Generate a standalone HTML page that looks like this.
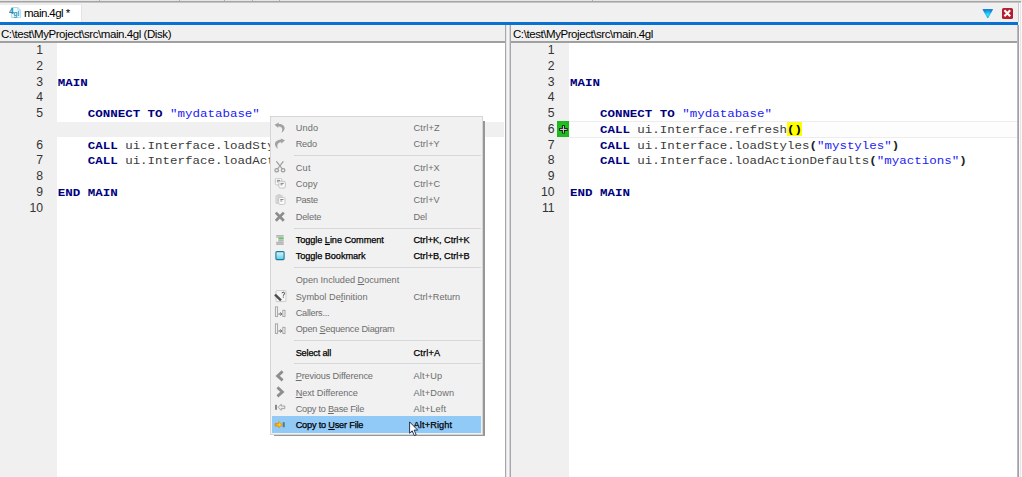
<!DOCTYPE html>
<html><head><meta charset="utf-8"><title>main.4gl</title>
<style>
html,body{margin:0;padding:0}
body{width:1022px;height:477px;position:relative;overflow:hidden;background:#f0f0f0;font-family:"Liberation Sans", sans-serif;}
div,span{box-sizing:border-box}
.abs{position:absolute}
#topline{left:0;top:1px;width:1021px;height:2px;background:linear-gradient(#a4a4a4 0,#a4a4a4 50%,#c6c6c6 50%,#c6c6c6 100%)}
#top0{left:0;top:0;width:1022px;height:1px;background:#e6e6e6}
.tick{top:0;width:1px;height:1px;background:#b0b0b0}
#tab{left:0;top:4px;width:82px;height:19px;background:#fff;border-right:1px solid #e4e4e4;border-top:1px solid #ececec}
#tabtxt{left:24px;top:6px;font-size:11.5px;line-height:14px;color:#000;white-space:nowrap;letter-spacing:-0.55px}
#blue{left:0;top:22px;width:1018px;height:3px;background:#0a71d3}
.path{top:26.5px;height:15px;font-size:11.5px;line-height:15px;color:#000;white-space:nowrap;letter-spacing:-0.43px}
.pb{height:2px;background:#a0a0a0;top:41px}
.gut{background:#f0f0f0}
.ed{background:#fff}
.ln{position:absolute;height:15.75px;line-height:15.75px;font-size:12.2px;color:#333;text-align:right;padding-right:14.5px;white-space:pre}
.cl{position:absolute;height:15.75px;line-height:15.75px;font-family:"Liberation Mono", monospace;font-size:12.48px;color:#3a3a3a;white-space:pre;transform:scaleY(0.88);transform-origin:0 50%}
.k{font-weight:bold;color:#000080}
.s{color:#2222f2}
.p{font-weight:bold;color:#222}
.y{font-weight:bold;color:#000}
#menu{left:270px;top:116px;width:213.4px;height:318.5px;background:#f1f1f1;border:1px solid #d6d6d6}
.sh{position:absolute;background:#979797}
.mi{position:absolute;left:1px;width:208.5px;height:16.35px;line-height:16.35px;font-size:9.2px;color:#6d6d6d;white-space:nowrap}
.mi.en{color:#000;-webkit-text-stroke:0.25px #000}
.mi.hl{background:#91c9f7;height:16.8px;margin-top:-0.2px}
.mi .ic{position:absolute;left:1.8px;top:2.4px;width:13px;height:12px;line-height:0}
.mi .lb{position:absolute;left:23.7px;top:1px}
.mi .sc{position:absolute;left:141.5px;top:1px}
.msep{position:absolute;left:22.5px;width:187px;height:1px;background:#d7d7d7}
</style></head><body>
<div class="abs" id="top0"></div>
<div class="abs" id="topline"></div>
<div class="abs tick" style="left:99px"></div><div class="abs tick" style="left:179px"></div><div class="abs tick" style="left:224px"></div><div class="abs tick" style="left:252px"></div><div class="abs tick" style="left:279px"></div><div class="abs tick" style="left:592px"></div>
<div class="abs" id="tab"></div>
<div class="abs" style="left:9px;top:6.8px;line-height:0"><svg width="13" height="12" viewBox="0 0 13 12"><path d="M2.6 0.5 H8.8 L11.6 3.2 V10.5 H2.6 Z" fill="#f4fbfd" stroke="#a6d6e8" stroke-width=".9"/><path d="M8.8 0.5 V3.2 H11.6" fill="none" stroke="#a6d6e8" stroke-width=".8"/><text x="0.1" y="7" font-size="8.6" font-family="Liberation Sans, sans-serif" fill="#1b8cb5" font-weight="bold">4</text><text x="4.4" y="9.2" font-size="6.6" font-family="Liberation Sans, sans-serif" fill="#2496c0" font-weight="bold">gl</text></svg></div>
<div class="abs" id="tabtxt">main.4gl *</div>
<div class="abs" id="blue"></div>
<div class="abs" style="left:981.6px;top:7.8px;line-height:0"><svg width="12" height="11" viewBox="0 0 12 11"><defs><radialGradient id="tg" cx="0.5" cy="0.62" r="0.5"><stop offset="0" stop-color="#22ecfa"/><stop offset="0.45" stop-color="#1fbef0"/><stop offset="1" stop-color="#1a84d8"/></radialGradient></defs><path d="M1.2 0.9 H10.4 Q11.4 0.9 10.9 1.8 L6.4 9.8 Q5.8 10.6 5.2 9.8 L0.7 1.8 Q0.2 0.9 1.2 0.9 Z" fill="url(#tg)"/></svg></div>
<div class="abs" style="left:1002.3px;top:8.3px;width:10.6px;height:10.4px;background:#b91d2d;border-radius:1.6px;line-height:0"><svg width="10.6" height="10.4" viewBox="0 0 10.6 10.4"><path d="M2.4 2.2 L8.2 8.2 M8.2 2.2 L2.4 8.2" stroke="#fff" stroke-width="2.1"/></svg></div>

<div class="abs path" style="left:1px">C:\test\MyProject\src\main.4gl (Disk)</div>
<div class="abs path" style="left:513px">C:\test\MyProject\src\main.4gl</div>
<div class="abs pb" style="left:0;width:505px"></div>
<div class="abs pb" style="left:511px;width:506px"></div>

<div class="abs gut" style="left:0;top:43px;width:57px;height:434px"></div>
<div class="abs ed" style="left:57px;top:43px;width:448px;height:434px"></div>
<div class="abs" style="left:57px;top:121.6px;width:447px;height:15.2px;background:#f0f0f0"></div>

<div class="abs" style="left:505px;top:25px;width:1px;height:452px;background:#a6a6ac"></div>
<div class="abs" style="left:506px;top:25px;width:1px;height:452px;background:#e4e4e6"></div>
<div class="abs" style="left:507px;top:25px;width:2px;height:452px;background:#f4f4f4"></div>
<div class="abs" style="left:509px;top:25px;width:1px;height:452px;background:#d4d4d8"></div>
<div class="abs" style="left:510px;top:25px;width:1px;height:452px;background:#a6a6ac"></div>
<div class="abs" style="left:1017px;top:25px;width:1px;height:452px;background:#b8b8be"></div>
<div class="abs" style="left:1018px;top:25px;width:1px;height:452px;background:#a0a0a8"></div>
<div class="abs" style="left:1018px;top:3px;width:1px;height:19px;background:#c8c8c8"></div>
<div class="abs" style="left:1019px;top:3px;width:3px;height:474px;background:#fafafa"></div>
<div class="abs" style="left:1020px;top:3px;width:1px;height:474px;background:#e6e6e6"></div>

<div class="abs gut" style="left:511px;top:43px;width:58px;height:434px"></div>
<div class="abs ed" style="left:569px;top:43px;width:448px;height:434px"></div>
<div class="abs" style="left:569px;top:121px;width:448px;height:17px;background:#fdfdfd;border-top:1px solid #ededed;border-bottom:1px solid #ededed"></div>
<div class="abs" style="left:787px;top:121.5px;width:15.2px;height:14.8px;background:#ffff00"></div>
<div class="abs" style="left:557px;top:121.3px;width:12px;height:15.7px;background:radial-gradient(#20c220 40%,#1dae1d 100%)"></div>
<div class="abs" style="left:558px;top:124px;width:11px;height:11px;line-height:0"><svg width="11" height="11" viewBox="0 0 11 11"><path d="M5.4 1.2 V9.6 M1.2 5.4 H9.6" stroke="#0c200c" stroke-width="3"/><path d="M5.4 2 V8.8 M2 5.4 H8.8" stroke="#ecd0ea" stroke-width="1"/></svg></div>
<div class="ln" style="left:0px;top:43.00px;width:57px;padding-right:14px">1</div><div class="ln" style="left:0px;top:58.75px;width:57px;padding-right:14px">2</div><div class="ln" style="left:0px;top:74.50px;width:57px;padding-right:14px">3</div><div class="cl" style="left:57.8px;top:75.70px"><span class="k">MAIN</span></div><div class="ln" style="left:0px;top:90.25px;width:57px;padding-right:14px">4</div><div class="ln" style="left:0px;top:106.00px;width:57px;padding-right:14px">5</div><div class="cl" style="left:57.8px;top:107.20px">    <span class="k">CONNECT TO</span> <span class="s">&quot;mydatabase&quot;</span></div><div class="ln" style="left:0px;top:121.75px;width:57px;padding-right:14px"></div><div class="ln" style="left:0px;top:137.50px;width:57px;padding-right:14px">6</div><div class="cl" style="left:57.8px;top:138.70px">    <span class="k">CALL</span> ui.Interface.loadStyles(<span class="s">&quot;mystyles&quot;</span>)</div><div class="ln" style="left:0px;top:153.25px;width:57px;padding-right:14px">7</div><div class="cl" style="left:57.8px;top:154.45px">    <span class="k">CALL</span> ui.Interface.loadActionDefaults(<span class="s">&quot;myactions&quot;</span>)</div><div class="ln" style="left:0px;top:169.00px;width:57px;padding-right:14px">8</div><div class="ln" style="left:0px;top:184.75px;width:57px;padding-right:14px">9</div><div class="cl" style="left:57.8px;top:185.95px"><span class="k">END MAIN</span></div><div class="ln" style="left:0px;top:200.50px;width:57px;padding-right:14px">10</div>
<div class="ln" style="left:511px;top:43.00px;width:58px;padding-right:14.4px">1</div><div class="ln" style="left:511px;top:58.75px;width:58px;padding-right:14.4px">2</div><div class="ln" style="left:511px;top:74.50px;width:58px;padding-right:14.4px">3</div><div class="cl" style="left:570.0px;top:75.70px"><span class="k">MAIN</span></div><div class="ln" style="left:511px;top:90.25px;width:58px;padding-right:14.4px">4</div><div class="ln" style="left:511px;top:106.00px;width:58px;padding-right:14.4px">5</div><div class="cl" style="left:570.0px;top:107.20px">    <span class="k">CONNECT TO</span> <span class="s">&quot;mydatabase&quot;</span></div><div class="ln" style="left:511px;top:121.75px;width:58px;padding-right:14.4px">6</div><div class="cl" style="left:570.0px;top:122.95px">    <span class="k">CALL</span> ui.Interface.refresh<span class="y">()</span></div><div class="ln" style="left:511px;top:137.50px;width:58px;padding-right:14.4px">7</div><div class="cl" style="left:570.0px;top:138.70px">    <span class="k">CALL</span> ui.Interface.loadStyles<span class="p">(</span><span class="s">&quot;mystyles&quot;</span><span class="p">)</span></div><div class="ln" style="left:511px;top:153.25px;width:58px;padding-right:14.4px">8</div><div class="cl" style="left:570.0px;top:154.45px">    <span class="k">CALL</span> ui.Interface.loadActionDefaults<span class="p">(</span><span class="s">&quot;myactions&quot;</span><span class="p">)</span></div><div class="ln" style="left:511px;top:169.00px;width:58px;padding-right:14.4px">9</div><div class="ln" style="left:511px;top:184.75px;width:58px;padding-right:14.4px">10</div><div class="cl" style="left:570.0px;top:185.95px"><span class="k">END MAIN</span></div><div class="ln" style="left:511px;top:200.50px;width:58px;padding-right:14.4px">11</div>

<div class="abs sh" style="left:483.4px;top:120.5px;width:1.7px;height:315.6px"></div>
<div class="abs sh" style="left:274px;top:434.5px;width:211.1px;height:1.6px"></div>
<div class="abs" id="menu"><div class="mi" style="top:2.30px"><span class="ic"><svg width="12" height="12" viewBox="0 0 12 12"><path d="M0.5 2.7 L4.9 0.6 L4.6 2 C8.5 1.6 11 4.2 10.6 6.6 C10.3 8.6 9 10 7.6 10.9 C8.4 8.6 8.6 6.8 7.4 5.6 C6.6 4.8 5.4 4.5 4.2 4.5 L4.3 5.9 Z" fill="#a2a2a2"/></svg></span><span class="lb" id="lb0" style="top:1px;letter-spacing:0.139px">Undo</span><span class="sc" id="sc0" style="top:1px;letter-spacing:0.174px">Ctrl+Z</span></div><div class="mi" style="top:18.65px"><span class="ic"><svg width="12" height="12" viewBox="0 0 12 12"><path d="M11 2.3 L6.6 0.4 L6.9 1.8 C3 1.6 0.6 4.2 1 6.6 C1.3 8.6 2.4 10 3.8 10.9 C3.2 8.6 3 6.8 4.2 5.6 C5 4.8 6.2 4.3 7.4 4.3 L7.3 5.7 Z" fill="#a2a2a2"/></svg></span><span class="lb" id="lb1" style="top:0.4px;letter-spacing:-0.211px">Redo</span><span class="sc" id="sc1" style="top:0.4px;letter-spacing:0.086px">Ctrl+Y</span></div><div class="msep" style="top:38.05px"></div><div class="mi" style="top:42.10px"><span class="ic"><svg width="12" height="12" viewBox="0 0 12 12"><path d="M2.4 0.3 L8.4 8 M9.4 0.3 L3.4 8" stroke="#9c9c9c" stroke-width="1.2" fill="none"/><ellipse cx="2.7" cy="9.3" rx="1.8" ry="1.6" fill="none" stroke="#9c9c9c" stroke-width="1.2"/><ellipse cx="9.1" cy="9.3" rx="1.8" ry="1.6" fill="none" stroke="#9c9c9c" stroke-width="1.2"/></svg></span><span class="lb" id="lb2" style="top:1px;letter-spacing:0.237px">Cut</span><span class="sc" id="sc2" style="top:1px;letter-spacing:0.086px">Ctrl+X</span></div><div class="mi" style="top:58.45px"><span class="ic"><svg width="12" height="12" viewBox="0 0 12 12"><rect x="1.3" y="0.3" width="6.4" height="6.6" rx="1.3" fill="#fbfbfb" stroke="#bcbcbc" stroke-width=".9"/><path d="M2.9 2.4h3.2M2.9 3.8h1.8" stroke="#7a7a7a" stroke-width=".9"/><rect x="4.9" y="3.3" width="6.4" height="6.7" rx="1.3" fill="#fbfbfb" stroke="#bcbcbc" stroke-width=".9"/><path d="M6.5 5.4h3.3M6.5 6.8h2" stroke="#7a7a7a" stroke-width=".9"/></svg></span><span class="lb" id="lb3" style="top:1px;letter-spacing:0.143px">Copy</span><span class="sc" id="sc3" style="top:1px;letter-spacing:0.069px">Ctrl+C</span></div><div class="mi" style="top:74.80px"><span class="ic"><svg width="12" height="12" viewBox="0 0 12 12"><rect x="1.4" y="1" width="7.5" height="8.9" rx="1" fill="#d4d4d4"/><rect x="3.4" y="0.2" width="3.4" height="1.8" rx=".6" fill="#cdcdcd"/><rect x="4.7" y="3.5" width="6.3" height="6.9" rx="1.3" fill="#fcfcfc" stroke="#c2c2c2" stroke-width=".9"/><path d="M6.3 5.5h3.2M6.3 7h2" stroke="#7a7a7a" stroke-width=".9"/></svg></span><span class="lb" id="lb4" style="top:0.4px;letter-spacing:-0.295px">Paste</span><span class="sc" id="sc4" style="top:0.4px;letter-spacing:0.086px">Ctrl+V</span></div><div class="mi" style="top:91.15px"><span class="ic"><svg width="12" height="12" viewBox="0 0 12 12"><path d="M1.8 1.6 L9.8 9.8 M9.8 1.6 L1.8 9.8" stroke="#8c8c8c" stroke-width="2.7" fill="none"/></svg></span><span class="lb" id="lb5" style="top:1px;letter-spacing:-0.156px">Delete</span><span class="sc" id="sc5" style="top:1px;letter-spacing:-0.161px">Del</span></div><div class="msep" style="top:110.55px"></div><div class="mi en" style="top:114.60px"><span class="ic"><svg width="12" height="12" viewBox="0 0 12 12"><rect x="2.2" y="1" width="7.4" height="10" fill="#c6c6c6"/><path d="M2.2 1.6h7.4M2.2 6.4h7.4M2.2 8.6h7.4M2.2 10.4h7.4" stroke="#b4b4b4" stroke-width=".9"/><rect x="2.2" y="4" width="2" height="3.6" fill="#fafafa"/><rect x="4.6" y="3.6" width="5" height="1.3" fill="#3fd24f"/></svg></span><span class="lb" id="lb6" style="top:0.30000000000000004px;letter-spacing:-0.067px">Toggle <u>L</u>ine Comment</span><span class="sc" id="sc6" style="top:0.30000000000000004px;letter-spacing:-0.040px">Ctrl+K, Ctrl+K</span></div><div class="mi en" style="top:130.95px"><span class="ic"><svg width="12" height="12" viewBox="0 0 12 12"><defs><linearGradient id="bg1" x1="0" y1="0" x2="0" y2="1"><stop offset="0" stop-color="#e2f7fb"/><stop offset="1" stop-color="#5fcbe3"/></linearGradient></defs><rect x="1.9" y="1.6" width="8.2" height="8" rx="1" fill="url(#bg1)" stroke="#187a9c" stroke-width="1.1"/></svg></span><span class="lb" id="lb7" style="top:0.30000000000000004px;letter-spacing:-0.077px">Toggle Bookmark</span><span class="sc" id="sc7" style="top:0.30000000000000004px;letter-spacing:-0.040px">Ctrl+B, Ctrl+B</span></div><div class="msep" style="top:150.35px"></div><div class="mi" style="top:154.40px"><span class="ic"></span><span class="lb" id="lb8" style="top:1px;letter-spacing:-0.032px">Open Included <u>D</u>ocument</span><span class="sc" id="sc8" style="top:1px;letter-spacing:0.000px"></span></div><div class="mi" style="top:170.75px"><span class="ic"><svg width="13" height="13" viewBox="0 0 13 13"><rect x="2" y="0.6" width="10" height="11" rx=".8" fill="#f6f6f6" stroke="#c2c2c2" stroke-width=".8"/><path d="M8 3.3 C8 1.9 10.6 1.9 10.6 3.4 C10.6 4.6 9.3 4.5 9.3 5.7 M9.3 6.6 v1" stroke="#333" stroke-width="1" fill="none"/><path d="M1 4.6 L7 10.4" stroke="#4a4a4a" stroke-width="2.4"/></svg></span><span class="lb" id="lb9" style="top:1px;letter-spacing:0.018px">Symbol De<u>f</u>inition</span><span class="sc" id="sc9" style="top:1px;letter-spacing:-0.057px">Ctrl+Return</span></div><div class="mi" style="top:187.10px"><span class="ic"><svg width="12" height="12" viewBox="0 0 12 12"><rect x="1.4" y="0.9" width="2.2" height="9.6" fill="none" stroke="#a0a0a0" stroke-width=".9"/><rect x="8.8" y="4.3" width="2.2" height="6.2" fill="none" stroke="#a0a0a0" stroke-width=".9"/><path d="M4.4 8 h3.4 M6.2 6.5 L7.9 8 L6.2 9.5" stroke="#6a6a6a" stroke-width="1" fill="none"/></svg></span><span class="lb" id="lb10" style="top:1px;letter-spacing:-0.263px">Callers...</span><span class="sc" id="sc10" style="top:1px;letter-spacing:0.000px"></span></div><div class="mi" style="top:203.45px"><span class="ic"><svg width="12" height="12" viewBox="0 0 12 12"><rect x="1.4" y="0.9" width="2.2" height="9.6" fill="none" stroke="#a0a0a0" stroke-width=".9"/><rect x="8.8" y="4.3" width="2.2" height="6.2" fill="none" stroke="#a0a0a0" stroke-width=".9"/><path d="M4.4 8 h3.4 M6.2 6.5 L7.9 8 L6.2 9.5" stroke="#6a6a6a" stroke-width="1" fill="none"/></svg></span><span class="lb" id="lb11" style="top:1px;letter-spacing:-0.232px">Open <u>S</u>equence Diagram</span><span class="sc" id="sc11" style="top:1px;letter-spacing:0.000px"></span></div><div class="msep" style="top:222.85px"></div><div class="mi en" style="top:226.90px"><span class="ic"></span><span class="lb" id="lb12" style="top:1px;letter-spacing:-0.196px">Select all</span><span class="sc" id="sc12" style="top:1px;letter-spacing:0.169px">Ctrl+A</span></div><div class="msep" style="top:246.30px"></div><div class="mi" style="top:250.35px"><span class="ic"><svg width="12" height="12" viewBox="0 0 12 12"><path d="M8.6 1.4 L3.6 5.9 L8.6 10.4" stroke="#8e8e8e" stroke-width="2.8" fill="none"/></svg></span><span class="lb" id="lb13" style="top:1px;letter-spacing:-0.153px"><u>P</u>revious Difference</span><span class="sc" id="sc13" style="top:1px;letter-spacing:0.161px">Alt+Up</span></div><div class="mi" style="top:266.70px"><span class="ic"><svg width="12" height="12" viewBox="0 0 12 12"><path d="M3.4 1.4 L8.4 5.9 L3.4 10.4" stroke="#8e8e8e" stroke-width="2.8" fill="none"/></svg></span><span class="lb" id="lb14" style="top:1px;letter-spacing:-0.062px"><u>N</u>ext Difference</span><span class="sc" id="sc14" style="top:1px;letter-spacing:0.154px">Alt+Down</span></div><div class="mi" style="top:283.05px"><span class="ic"><svg width="13" height="12" viewBox="0 0 13 12"><rect x="1" y="2.8" width="2" height="5" fill="#8a8a8a"/><path d="M4.2 5.3 L7.2 2.2 L7.2 4 L10.8 4 L10.8 6.6 L7.2 6.6 L7.2 8.4 Z" fill="#ececec" stroke="#9c9c9c" stroke-width=".9"/></svg></span><span class="lb" id="lb15" style="top:1px;letter-spacing:-0.247px">Copy to <u>B</u>ase File</span><span class="sc" id="sc15" style="top:1px;letter-spacing:0.174px">Alt+Left</span></div><div class="mi en hl" style="top:299.40px"><span class="ic"><svg width="13" height="12" viewBox="0 0 13 12"><defs><linearGradient id="og" x1="0" y1="0" x2="1" y2="0"><stop offset="0" stop-color="#ff8a00"/><stop offset="0.6" stop-color="#ffd21a"/><stop offset="1" stop-color="#ffb000"/></linearGradient></defs><rect x="8.7" y="3.2" width="2.1" height="5" fill="#5f7a6e"/><path d="M8 5.7 L5 2.6 L5 4.4 L1.2 4.4 L1.2 7 L5 7 L5 8.8 Z" fill="url(#og)" stroke="#e08600" stroke-width=".7"/></svg></span><span class="lb" id="lb16" style="top:1px;letter-spacing:-0.203px">Copy to <u>U</u>ser File</span><span class="sc" id="sc16" style="top:1px;letter-spacing:0.141px">Alt+Right</span></div></div>
<div class="abs" style="left:408.7px;top:420.5px;line-height:0"><svg width="10" height="16" viewBox="0 0 10 16"><path d="M0.6 0.9 L0.6 12.2 L3.2 9.8 L5.3 14.6 L7.2 13.8 L5.1 9.1 L8.7 9.1 Z" fill="#fff" stroke="#16233f" stroke-width="0.9"/></svg></div>
</body></html>
